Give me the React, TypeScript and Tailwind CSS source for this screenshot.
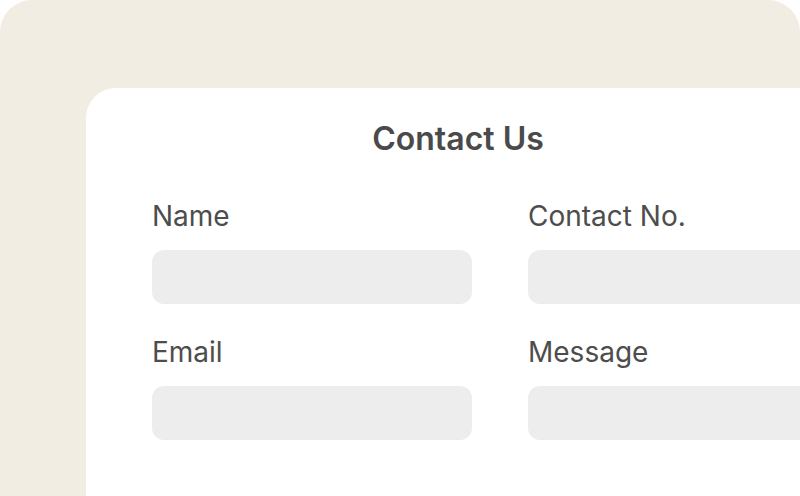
import React from 'react';

const fields = ['Name', 'Contact No.', 'Email', 'Message'];

const App: React.FC = () => {
  return (
    <div className="w-[800px] h-[496px] overflow-hidden bg-white font-['Inter',sans-serif]">
      <div className="h-full bg-[#f1ede2] rounded-t-[32px] pt-[88px] pl-[86px]">
        <div className="w-[744px] h-full bg-white rounded-tl-[30px] pt-[31px] pl-[66px]">
          <h1 className="w-[612px] text-center text-[32px] leading-[40px] font-semibold text-[#4a4a4a]">
            Contact Us
          </h1>
          <div className="mt-[40px] grid grid-cols-[320px_320px] gap-x-[56px] gap-y-[31px]">
            {fields.map((f) => (
              <div key={f} className="flex flex-col">
                <label className="text-[28px] leading-[34px] text-[#4d4d4d]">{f}</label>
                <div className="mt-[17px] h-[54px] rounded-[12px] bg-[#ededed]"></div>
              </div>
            ))}
          </div>
        </div>
      </div>
    </div>
  );
};

export default App;
